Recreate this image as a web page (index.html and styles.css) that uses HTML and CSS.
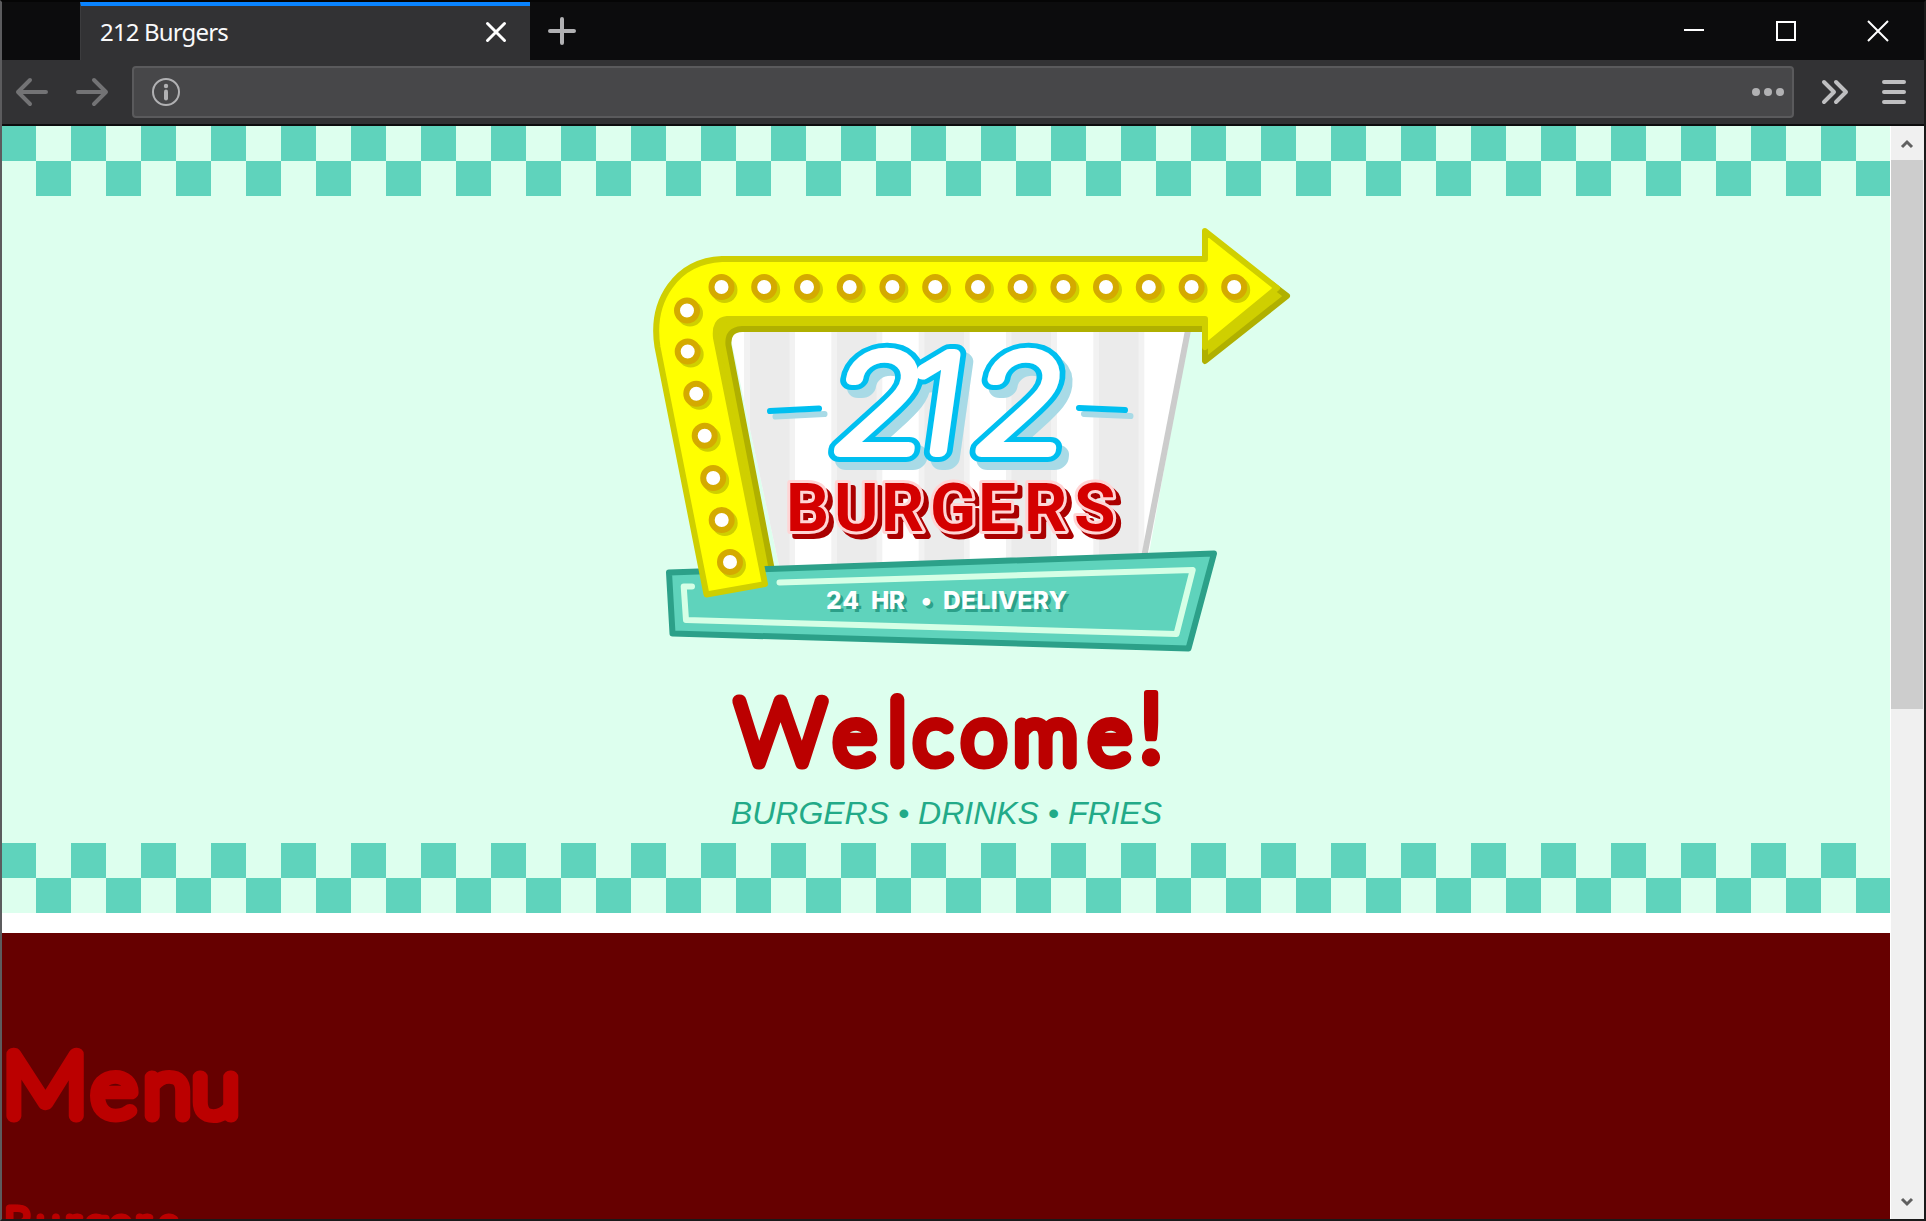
FILE: index.html
```html
<!DOCTYPE html>
<html lang="en">
<head>
<meta charset="utf-8">
<title>212 Burgers</title>
<link rel="stylesheet" href="styles.css">
</head>
<body>
<div class="window">
  <header class="tabstrip">
    <div class="tab">
      <span class="tab-title">212 Burgers</span>
      <svg class="tab-close" width="22" height="22" viewBox="0 0 22 22"><path d="M2.5 2.500l17 17M19.500 2.500l-17 17"/></svg>
    </div>
    <svg class="new-tab" width="28" height="28" viewBox="0 0 28 28"><path d="M14 2v24M2 14h24"/></svg>
    <div class="controls">
      <svg width="24" height="24" viewBox="0 0 24 24"><path d="M2 11h20"/></svg>
      <svg width="24" height="24" viewBox="0 0 24 24"><path d="M3 3h18v18h-18z"/></svg>
      <svg width="24" height="24" viewBox="0 0 24 24"><path d="M2 2l20 20M22 2l-20 20"/></svg>
    </div>
  </header>
  <nav class="toolbar">
    <svg class="nav-arrow" width="36" height="32" viewBox="0 0 36 32"><path d="M32 16H4M16 4L4 16l12 12"/></svg>
    <svg class="nav-arrow" width="36" height="32" viewBox="0 0 36 32"><path d="M4 16h28M20 4l12 12-12 12"/></svg>
    <div class="urlbar">
      <svg width="30" height="30" viewBox="0 0 30 30"><circle class="ring" cx="15" cy="15" r="13"/><circle class="dot" cx="15" cy="9" r="2.200"/><path class="stem" d="M15 14.500v7"/></svg>
      <svg width="34" height="10" viewBox="0 0 34 10"><circle class="dot" cx="5" cy="5" r="4"/><circle class="dot" cx="17" cy="5" r="4"/><circle class="dot" cx="29" cy="5" r="4"/></svg>
    </div>
    <svg class="tool more" width="28" height="28" viewBox="0 0 28 28"><path d="M3 4l10 10-10 10M15 4l10 10-10 10"/></svg>
    <svg class="tool" width="24" height="28" viewBox="0 0 24 28"><path d="M2 4h20M2 14h20M2 24h20"/></svg>
  </nav>
  <div class="viewport">
    <div class="page">
      <section class="hero">
        <svg class="logo" width="700" height="480" viewBox="596 196 700 480">
          <defs>
            <clipPath id="board"><path d="M728 325H1190L1146 570H780z"/></clipPath>
            <g id="bulb">
              <circle cx="3" cy="3" r="13" fill="#cfcf00"/>
              <circle r="10" fill="#fff" stroke="#d4aa00" stroke-width="6"/>
            </g>
            <text id="digits" class="digits" transform="translate(0 450.5) skewX(-8) scale(1.15 1)" x="719 784 842" y="0">212</text>
            <text id="burgers" class="burgers" x="786 834 881 930 978 1024 1074" y="531">BURGERS</text>
            <g id="delivery" class="delivery">
              <text x="826" y="609" textLength="33">24</text>
              <text x="871" y="609" textLength="34">HR</text>
              <text x="921" y="609">•</text>
              <text x="943" y="609" textLength="124">DELIVERY</text>
            </g>
          </defs>
          <g clip-path="url(#board)">
            <path d="M720 320h480v260h-480z" fill="#fff"/>
            <path d="M744 320h51v260h-51zM831.300 320h51v260h-51zM918.700 320h51v260h-51zM1006 320h51v260h-51zM1093.300 320h51v260h-51z" fill="#f2f2f2"/>
            <path d="M750 320h39.500v260h-39.500zM837 320h39.500v260h-39.500zM924.500 320h39.500v260h-39.500zM1011.500 320h39.500v260h-39.500zM1099 320h39.500v260h-39.500z" fill="#ebebeb"/>
          </g>
          <path d="M1189 325L1143.500 560" stroke="#ccc" stroke-width="6"/>
          <path class="shadow-arrow" d="M700 290H1205L1270 283L1287 296L1205 361V329H742Q727 330 728.500 345L771.500 568L745 572z"/>
          <path class="base" d="M669 572.500L1214 553.500L1188.500 648.500L672.500 633.500z"/>
          <path class="trim" d="M692 586.500H683.700L686 620L1176.500 634L1192.700 570L779.500 582.500"/>
          <path class="arrow" d="M722 259H1205V231L1277 288L1205 347V319H727Q714 320 716 338L765 584L706.500 594.500L657.500 347C650 300 677 261 722 259z"/>
          <g>
            <use href="#bulb" x="721.500" y="287"/><use href="#bulb" x="764.200" y="287"/><use href="#bulb" x="807" y="287"/><use href="#bulb" x="849.700" y="287"/><use href="#bulb" x="892.400" y="287"/><use href="#bulb" x="935.200" y="287"/><use href="#bulb" x="978" y="287"/><use href="#bulb" x="1020.600" y="287"/><use href="#bulb" x="1063.400" y="287"/><use href="#bulb" x="1106" y="287"/><use href="#bulb" x="1148.800" y="287"/><use href="#bulb" x="1191.600" y="287"/><use href="#bulb" x="1234.200" y="287"/>
            <use href="#bulb" x="687" y="310.500"/><use href="#bulb" x="687.700" y="351.500"/><use href="#bulb" x="696.300" y="393.700"/><use href="#bulb" x="704.700" y="435.700"/><use href="#bulb" x="713.200" y="478"/><use href="#bulb" x="721.700" y="520"/><use href="#bulb" x="730" y="562"/>
          </g>
          <path class="dash pale" d="M775.500 416.500L824.500 414M1084 414L1130.500 416"/>
          <path class="dash" d="M770 411L819 408.500M1079 408L1125 410"/>
          <use href="#digits" class="d-shadow" x="7" y="8"/>
          <use href="#digits" class="d-outline"/>
          <use href="#digits" class="d-core"/>
          <use href="#burgers" class="b-shadow" x="5" y="4.500"/>
          <use href="#burgers" class="b-halo"/>
          <use href="#burgers" class="b-face"/>
          <use href="#delivery" fill="#2ca089" x="3" y="3"/>
          <use href="#delivery" fill="#fff"/>
        </svg>
        <h1 class="welcome">
          <svg width="700" height="110" viewBox="596 676 700 110"><text class="comic" y="763"><tspan class="cap" x="736">W</tspan><tspan x="834">e</tspan><tspan class="cap" x="888">l</tspan><tspan x="914 962 1014 1089">come</tspan><tspan class="cap bang" x="1138">!</tspan></text></svg>
        </h1>
        <p class="tagline">BURGERS • DRINKS • FRIES</p>
      </section>
      <section class="menu">
        <h1 class="menu-title"><svg width="400" height="110" viewBox="2 1030 400 110"><text class="comic" transform="scale(1.08 1)" y="1116"><tspan class="cap" x="2">M</tspan><tspan x="85 133 178">enu</tspan></text></svg></h1>
        <h2 class="menu-sub"><svg width="400" height="40" viewBox="2 1190 400 40"><text class="comic small" x="4 36 65 85 109 135 159" y="1239">Burgers</text></svg></h2>
      </section>
    </div>
    <div class="scrollbar">
      <svg width="14" height="12" viewBox="0 0 14 12"><path d="M2 9l5-5 5 5"/></svg>
      <div class="thumb"></div>
      <svg class="down" width="14" height="12" viewBox="0 0 14 12"><path d="M2 3l5 5 5-5"/></svg>
    </div>
  </div>
</div>
</body>
</html>
```
FILE: styles.css
```css
* { box-sizing: border-box; }
body { margin: 0; background: #1a1a1a; font-family: "Liberation Sans", Arial, sans-serif; }
svg { display: block; flex: none; fill: none; overflow: visible; }
.window {
  width: 1926px; height: 1221px; overflow: hidden;
  display: flex; flex-direction: column;
  border: 2px solid #1a1a1a;
  border-top-color: #050505; border-left-color: #5c5c5e;
  background: #0c0c0d;
}
.tabstrip { height: 58px; display: flex; align-items: center; padding-left: 78px; background: #0c0c0d; }
.tab {
  width: 450px; height: 58px; padding: 0 23px 0 19px;
  display: flex; align-items: center; justify-content: space-between;
  background: #323234; border-top: 4px solid #0a84ff; border-left: 1px solid #3c3c3e;
}
.tab-title { font: 24px/30px "Noto Sans", "Open Sans", sans-serif; color: #f9f9fa; letter-spacing: -0.85px; margin-top: -2px; }
.tab-close { stroke: #fff; stroke-width: 3; stroke-linecap: round; margin-top: -3px; }
.new-tab { margin-left: 18px; stroke: #b1b1b3; stroke-width: 4; stroke-linecap: round; }
.controls { margin-left: auto; display: flex; gap: 68px; padding-right: 34px; stroke: #fff; stroke-width: 2; }
.toolbar { height: 66px; display: flex; align-items: center; padding: 0 16px 0 12px; background: #323234; border-bottom: 2px solid #0c0c0d; }
.nav-arrow { stroke: #737375; stroke-width: 4; stroke-linecap: round; stroke-linejoin: round; margin-right: 24px; }
.urlbar {
  width: 1662px; height: 52px; padding: 0 7px 0 17px; margin-left: -2px; margin-right: 26px;
  display: flex; align-items: center; justify-content: space-between;
  background: #474749; border: 2px solid #5a5a5c; border-radius: 4px;
}
.ring { stroke: #b1b1b3; stroke-width: 2; }
.dot { fill: #b1b1b3; }
.stem { stroke: #b1b1b3; stroke-width: 4; stroke-linecap: round; }
.tool { stroke: #bfbfc1; stroke-width: 4; stroke-linecap: round; stroke-linejoin: round; }
.more { margin-right: 33px; margin-left: 1px; }
.viewport { flex: 1; min-height: 0; display: flex; background: #fff; }
.page { width: 1888px; overflow: hidden; }
.hero {
  height: 787px; padding-top: 70px; display: flex; flex-direction: column; align-items: center;
  background-color: #ddffee;
  background-image: conic-gradient(#5fd3bc 25%, transparent 0 50%, #5fd3bc 0 75%, transparent 0), conic-gradient(#5fd3bc 25%, transparent 0 50%, #5fd3bc 0 75%, transparent 0);
  background-size: 70px 70px; background-repeat: repeat-x;
  background-position: 34px 0, 34px 717px;
}
.welcome, .menu-title, .menu-sub { margin: 0; font-size: 100px; }
.tagline { margin: 8px 0 0 1px; font-size: 32px; line-height: 38px; font-style: italic; color: #22aa88; white-space: nowrap; }
.menu { margin-top: 20px; height: 500px; padding-top: 97px; background: #660000; }
.menu-sub { margin-top: 50px; }
.comic {
  font-family: Lato, "Open Sans", sans-serif; font-weight: 100; font-size: 80px;
  fill: #bb0000; stroke: #bb0000; stroke-width: 13px; stroke-linejoin: round; stroke-linecap: round;
}
.comic .cap { font-size: 89px; }
.comic .bang { font-weight: 400; stroke-width: 6px; font-size: 97px; }
.comic.small { font-size: 44px; stroke-width: 7px; }
.scrollbar {
  width: 33px; margin-left: 1px; display: flex; flex-direction: column; align-items: center;
  padding: 12px 1px 11px 0; background: #f0f0f0;
}
.scrollbar svg { stroke: #606060; stroke-width: 3; }
.thumb { width: 32px; height: 549px; margin-top: 10px; background: #cdcdcd; }
.down { margin-top: auto; }
.arrow { fill: #ff0; stroke: #cfcf00; stroke-width: 6; stroke-linejoin: round; }
.shadow-arrow { fill: #cfcf00; stroke: #b0b000; stroke-width: 6; stroke-linejoin: round; }
.base { fill: #5fd3bc; stroke: #2ca089; stroke-width: 6; stroke-linejoin: round; }
.trim { stroke: #d5ffe6; stroke-width: 6; stroke-linejoin: round; stroke-linecap: round; }
.dash { stroke: #00bff0; stroke-width: 6; stroke-linecap: round; }
.pale { stroke: #a8dae6; }
.digits { font-family: Inter, sans-serif; font-weight: 100; font-size: 132px; stroke-linejoin: round; stroke-linecap: round; }
.d-shadow { fill: #a8dae6; stroke: #a8dae6; stroke-width: 22px; }
.d-outline { fill: #00bff0; stroke: #00bff0; stroke-width: 22px; }
.d-core { fill: #fff; stroke: #fff; stroke-width: 12px; }
.burgers { font-family: Roboto, sans-serif; font-weight: 700; font-size: 67.5px; stroke-linejoin: round; }
.b-shadow { fill: #a00; stroke: #a00; stroke-width: 6px; }
.b-halo { fill: #ffd5d5; stroke: #ffd5d5; stroke-width: 6px; }
.b-face { fill: #d40000; }
.delivery { font-family: Inter, sans-serif; font-weight: 800; font-size: 24.5px; }
```
